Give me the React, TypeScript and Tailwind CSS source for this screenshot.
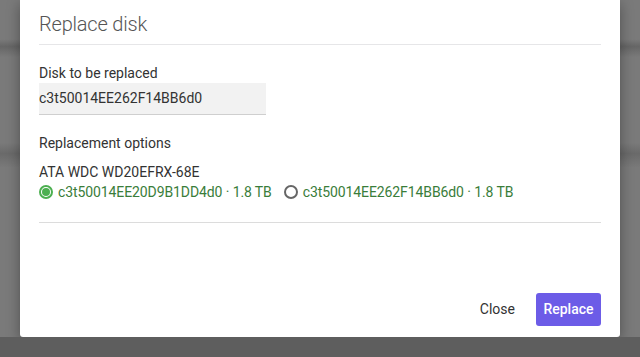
const options = [
  { id: "c3t50014EE20D9B1DD4d0", size: "1.8 TB", checked: true },
  { id: "c3t50014EE262F14BB6d0", size: "1.8 TB", checked: false },
];

const Radio = ({ checked }: { checked: boolean }) =>
  checked ? (
    <span className="w-[14px] h-[14px] rounded-full border-2 border-[#4caf50] flex items-center justify-center">
      <span className="w-[8px] h-[8px] rounded-full bg-[#4caf50]" />
    </span>
  ) : (
    <span className="w-[14px] h-[14px] rounded-full border-2 border-[#666]" />
  );

const App = () => {
  return (
    <div className="w-[640px] h-[357px] overflow-hidden bg-[linear-gradient(180deg,#7a7a7a_0%,#7a7a7a_11%,#666_13%,#7a7a7a_16%,#7a7a7a_40%,#6a6a6a_43%,#7a7a7a_47%,#7a7a7a_100%)] font-['Roboto',sans-serif] flex flex-col">
      <div className="ml-[20px] w-[600px] h-[337px] shrink-0 bg-white rounded-b-[3px] shadow-[0_4px_14px_rgba(0,0,0,0.35)] px-[19px] flex flex-col">
        {/* Header */}
        <div className="h-[45px] border-b border-[#e6e6e8] flex items-center pt-[4px]">
          <h1 className="text-[20px] font-light text-[#555] tracking-[-0.2px]">Replace disk</h1>
        </div>

        {/* Body */}
        <div className="pt-[19px] border-b border-[#dcdcdc] pb-[21px]">
          <div className="text-[14px] text-[#333] leading-[18px]">Disk to be replaced</div>
          <div className="mt-[1px] w-[227px] h-[32px] bg-[#f2f2f2] border-b border-[#cfcfcf] flex items-center text-[14px] text-[#333]">
            c3t50014EE262F14BB6d0
          </div>

          <div className="mt-[19px] text-[14px] text-[#333] leading-[18px]">Replacement options</div>
          <div className="mt-[11px] text-[14px] text-[#333] leading-[18px]">ATA WDC WD20EFRX-68E</div>
          <div className="mt-[2px] flex items-center gap-[12px] text-[14px] text-[#3a7d3a] leading-[18px]">
            {options.map((o) => (
              <label key={o.id} className="flex items-center gap-[5px]">
                <Radio checked={o.checked} />
                <span className="tracking-[-0.1px]">
                  {o.id} · {o.size}
                </span>
              </label>
            ))}
          </div>
        </div>

        {/* Footer */}
        <div className="flex-1 flex items-end justify-end pb-[11px] gap-[21px]">
          <button className="h-[33px] text-[14px] text-[#333]">Close</button>
          <button className="h-[33px] w-[65px] rounded-[3px] bg-[#6c5ce7] text-white text-[14px] font-medium">
            Replace
          </button>
        </div>
      </div>
      <div className="flex-1 bg-[#5e5e5e]" />
    </div>
  );
};

export default App;
